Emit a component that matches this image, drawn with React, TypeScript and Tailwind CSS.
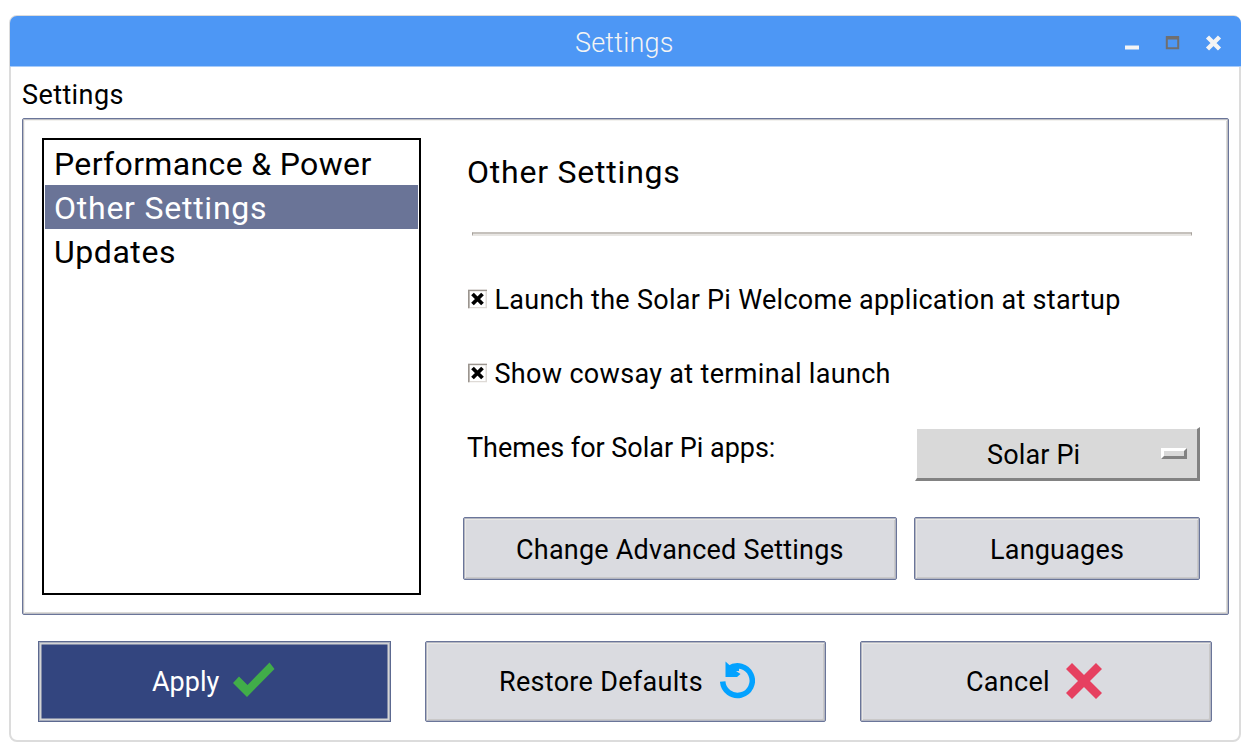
import type { ReactNode } from "react";

const items = [
  { label: "Performance & Power", spacing: "tracking-[0.35px]", selected: false },
  { label: "Other Settings", spacing: "tracking-[0.76px]", selected: true },
  { label: "Updates", spacing: "tracking-[0.55px]", selected: false },
];

function CheckRow({ label, spacing }: { label: string; spacing: string }) {
  return (
    <label className="flex h-8 items-center">
      <svg width="19" height="19" viewBox="0 0 19 19" className="mr-[7.5px] shrink-0 -translate-y-[1.5px]">
        <rect width="19" height="19" fill="#dedad6" />
        <path d="M0.75 19V0.75H19" fill="none" stroke="#9b958f" strokeWidth="1.5" />
        <rect x="2" y="2" width="15.5" height="15.5" fill="#fff" />
        <path d="M4.5 4.5L14.5 14.5M14.5 4.5L4.5 14.5" stroke="#000" strokeWidth="3.8" />
      </svg>
      <span className={`whitespace-nowrap text-[27px] leading-8 ${spacing}`}>{label}</span>
    </label>
  );
}

function Button({ children, className }: { children: ReactNode; className: string }) {
  return (
    <button
      className={`flex items-center rounded-[2px] border border-[#6a7599] bg-[#dadbe0] text-[27px] leading-8 whitespace-nowrap shadow-[inset_0_0_0_1px_#b3b6c2,inset_2px_2px_0_#e9e8e5,inset_-2px_-2px_0_#c9c8c8] ${className}`}
    >
      {children}
    </button>
  );
}

export default function App() {
  return (
    <div className="h-[756px] w-[1252px] overflow-hidden bg-white pt-[15px] pl-[9px] font-['Roboto',sans-serif] text-black">
      <main className="flex h-[727px] w-[1232px] flex-col rounded-[8px] border-2 border-[#dcdcdc] bg-white">
        <header className="-mt-px -mr-[2px] -ml-px flex h-[50px] shrink-0 items-center rounded-t-[7px] bg-[#4d97f5] pt-[3px] text-[#f4f4f4] shadow-[0_1px_0_#a6cbfa]">
          <h1 className="ml-[565px] w-[550px] pt-px text-[27px] leading-8 font-light tracking-[0.2px]">Settings</h1>
          <svg width="98" height="16" viewBox="0 0 98 16">
            <path d="M0 12.5H14" stroke="#f4f4f4" strokeWidth="4" />
            <path d="M41.8 2.2H53.2V13.2H41.8Z" fill="none" stroke="#706f6f" strokeWidth="2" />
            <path d="M41 2.8H54" stroke="#706f6f" strokeWidth="3.4" />
            <path d="M82.5 2L94.5 14M94.5 2L82.5 14" stroke="#f4f4f4" strokeWidth="4.4" />
          </svg>
        </header>

        <h2 className="mt-[13px] ml-[11px] h-8 text-[27px] leading-8 tracking-[0.4px]">Settings</h2>

        <section className="mt-[7px] ml-[11px] flex h-[497px] w-[1207px] shrink-0 rounded-[2px] border border-[#6a7599] shadow-[inset_0_0_0_1px_#bfc0c6,inset_2px_2px_0_#f3f2ef,inset_-2px_-2px_0_#dcdbd7]">
          <ul className="mt-[19px] ml-[19px] h-[457px] w-[379px] shrink-0 border-2 border-black p-px text-[32px] leading-[46px]">
            {items.map((item) => (
              <li
                key={item.label}
                className={`h-11 pl-[9px] ${item.spacing} ${item.selected ? "bg-[#6a7497] text-white" : ""}`}
              >
                {item.label}
              </li>
            ))}
          </ul>

          <div className="ml-[42px] flex w-[740px] flex-col">
            <h3 className="mt-[33px] ml-1 h-10 text-[32px] leading-10 tracking-[0.78px]">Other Settings</h3>
            <div className="mt-[40px] ml-[9px] h-1 w-[720px] border-x border-t-2 border-b-2 border-x-[#9b958f] border-t-[#c5c1bc] border-b-[#e8e6e3]" />
            <div className="mt-[48px] ml-[5px]">
              <CheckRow label="Launch the Solar Pi Welcome application at startup" spacing="tracking-[0.27px]" />
            </div>
            <div className="mt-[42px] ml-[5px]">
              <CheckRow label="Show cowsay at terminal launch" spacing="tracking-[0.32px]" />
            </div>
            <div className="mt-[37px] flex h-[54px]">
              <span className="mt-[5px] ml-1 w-[448px] text-[27px] leading-8 tracking-[-0.02px]">Themes for Solar Pi apps:</span>
              <button className="flex h-[54px] w-[285px] items-center border-t-2 border-r-[3px] border-b-[3px] border-l-2 border-t-white border-r-[#828282] border-b-[#828282] border-l-white bg-[#d9d9d9] pl-[70px] text-[27px] leading-8">
                <span className="w-[174px] translate-y-px text-left tracking-[0.15px]">Solar Pi</span>
                <span className="h-[11px] w-[26px] border-[3px] border-t-white border-r-[#828282] border-b-[#828282] border-l-white bg-[#d9d9d9]" />
              </button>
            </div>
            <div className="mt-9 flex gap-[17px]">
              <Button className="h-[63px] w-[434px] pt-[3px] pl-[52px] tracking-[0.22px]">Change Advanced Settings</Button>
              <Button className="h-[63px] w-[286px] pt-[3px] pl-[75px] tracking-[0.2px]">Languages</Button>
            </div>
          </div>
        </section>

        <footer className="mt-[26px] ml-[27px] flex">
          <button className="flex h-[81px] w-[353px] items-center border border-[#5c6990] bg-[#33457f] pl-[113px] text-[27px] leading-8 text-white shadow-[inset_0_0_0_1px_#a7adbd,inset_0_0_0_2.5px_#d4d4d4]">
            <span className="w-[81px] text-left">Apply</span>
            <svg width="42" height="35" viewBox="0 0 42 35" className="-translate-y-0.5">
              <path d="M0 21L6 14.5L14.5 23L36.5 0.5L41.5 7L14 35Z" fill="#41ad49" />
            </svg>
          </button>
          <Button className="ml-[34px] h-[81px] w-[401px] pl-[73px]">
            <span className="w-[221px] text-left tracking-[0.3px]">Restore Defaults</span>
            <svg width="35" height="38" viewBox="0 0 35 38" className="-translate-y-0.5">
              <path d="M2.7 20.5A14.8 14.8 0 1 0 9 7.5" fill="none" stroke="#03a2ff" strokeWidth="5.5" />
              <path d="M5.5 0.5L11 5.5L19 4V10H16L20.5 13L17 16H5.5Z" fill="#03a2ff" />
            </svg>
          </Button>
          <Button className="ml-[34px] h-[81px] w-[352px] pl-[105px]">
            <span className="w-[100px] text-left tracking-[0.3px]">Cancel</span>
            <svg width="36" height="36" viewBox="0 0 36 36" className="-translate-y-px">
              <path d="M3 3L33 33M33 3L3 33" stroke="#e64060" strokeWidth="8.5" />
            </svg>
          </Button>
        </footer>
      </main>
    </div>
  );
}
